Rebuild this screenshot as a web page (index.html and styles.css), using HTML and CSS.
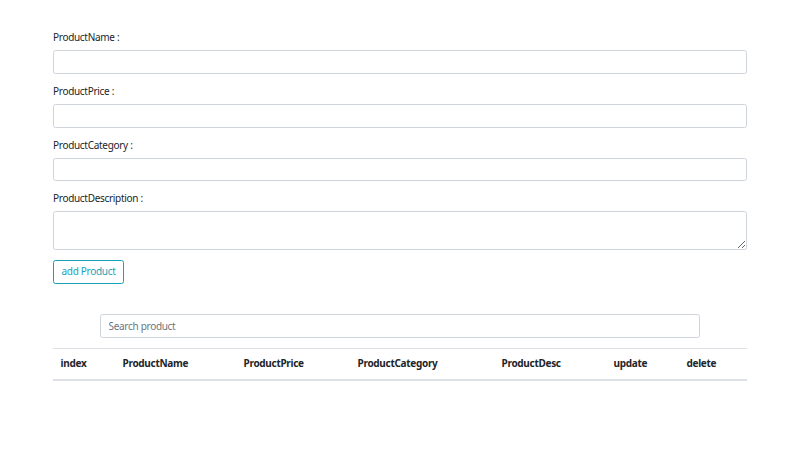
FILE: index.html
```html
<!DOCTYPE html>
<html lang="en">
  <head>
    <meta charset="UTF-8" />
    <meta name="viewport" content="width=device-width, initial-scale=1.0" />
    <title>Products</title>
    <link rel="stylesheet" href="styles.css">
  </head>
  <body>
    <div class="container">
      <!-- Product form -->
      <div class="form-group">
        <label for="productName">ProductName :</label>
        <input type="text" id="productName" class="form-control" />
      </div>
      <div class="form-group">
        <label for="productPrice">ProductPrice :</label>
        <input type="text" id="productPrice" class="form-control" />
      </div>
      <div class="form-group">
        <label for="productCategory">ProductCategory :</label>
        <input type="text" id="productCategory" class="form-control" />
      </div>
      <div class="form-group">
        <label for="productDesc">ProductDescription :</label>
        <textarea id="productDesc" class="form-control" rows="2"></textarea>
      </div>
      <button class="btn-outline-info">add Product</button>

      <!-- Search + table -->
      <div class="search-row">
        <input type="text" class="form-control search-input" placeholder="Search product" />
      </div>
      <table class="table">
        <thead>
          <tr>
            <th class="col-index">index</th>
            <th class="col-name">ProductName</th>
            <th class="col-price">ProductPrice</th>
            <th class="col-category">ProductCategory</th>
            <th class="col-desc">ProductDesc</th>
            <th class="col-update">update</th>
            <th class="col-delete">delete</th>
          </tr>
        </thead>
        <tbody id="tableBody"></tbody>
      </table>
    </div>
  </body>
</html>
```

FILE: styles.css
```css
* {
  margin: 0;
  padding: 0;
  box-sizing: border-box;
}

body {
  font-family: "Noto Sans", "Open Sans", sans-serif;
  font-size: 10px;
  line-height: 1.5;
  letter-spacing: -0.3px;
  color: #212529;
  background: #fff;
}

.container {
  width: 694px;
  margin: 0 auto;
  padding-top: 30px;
}

.form-group {
  margin-bottom: 10px;
}

.form-group label {
  display: inline-block;
  margin-bottom: 5px;
}

.form-control {
  display: block;
  width: 100%;
  height: 23.75px;
  padding: 3.75px 7.5px;
  font-family: inherit;
  font-size: 10px;
  line-height: 1.5;
  letter-spacing: -0.3px;
  color: #495057;
  background: #fff;
  border: 1px solid #ced4da;
  border-radius: 2.5px;
}

textarea.form-control {
  height: 38.75px;
}

.form-control::placeholder {
  color: #6c757d;
}

.btn-outline-info {
  display: inline-block;
  height: 23.75px;
  padding: 0 7.5px;
  font-family: inherit;
  font-size: 10px;
  line-height: 21.75px;
  letter-spacing: -0.3px;
  color: #17a2b8;
  background: transparent;
  border: 1px solid #17a2b8;
  border-radius: 2.5px;
  cursor: pointer;
}

.search-row {
  margin-top: 30px;
  margin-bottom: 10px;
  display: flex;
  justify-content: center;
}

.search-input {
  width: 600px;
}

.table {
  width: 100%;
  border-collapse: collapse;
  table-layout: fixed;
}

.table th {
  text-align: left;
  font-weight: 700;
  padding: 7.5px;
  line-height: 15px;
  border-top: 1px solid #dee2e6;
  border-bottom: 2px solid #dee2e6;
}

.col-index { width: 62px; }
.col-name { width: 121px; }
.col-price { width: 114px; }
.col-category { width: 144px; }
.col-desc { width: 112px; }
.col-update { width: 73px; }
.col-delete { width: 68px; }
```
